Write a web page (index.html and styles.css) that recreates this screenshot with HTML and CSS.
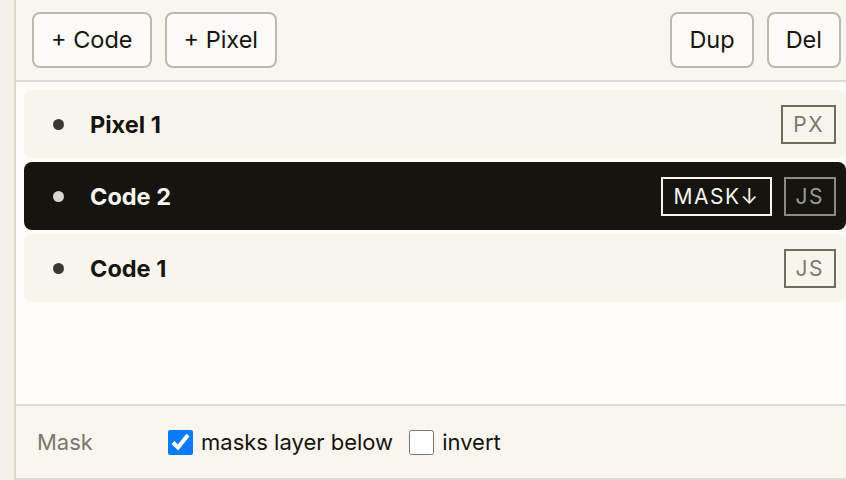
FILE: index.html
```html
<!DOCTYPE html>
<html>
<head>
<meta charset="utf-8">
<link rel="stylesheet" href="styles.css">
</head>
<body>
<div class="side"></div>
<div class="panel">
  <div class="toolbar">
    <button class="btn">+ Code</button>
    <button class="btn">+ Pixel</button>
    <div class="spacer"></div>
    <button class="btn">Dup</button>
    <button class="btn">Del</button>
  </div>
  <div class="list">
    <div class="row">
      <span class="dot"></span>
      <span class="name">Pixel 1</span>
      <span class="badge">PX</span>
    </div>
    <div class="row active">
      <span class="dot"></span>
      <span class="name">Code 2</span>
      <span class="badge mask">MASK↓</span>
      <span class="badge">JS</span>
    </div>
    <div class="row">
      <span class="dot"></span>
      <span class="name">Code 1</span>
      <span class="badge">JS</span>
    </div>
  </div>
  <div class="footer">
    <span class="label">Mask</span>
    <label class="check"><input type="checkbox" checked> masks layer below</label>
    <label class="check"><input type="checkbox"> invert</label>
  </div>
</div>
</body>
</html>
```
FILE: styles.css
```css
html, body {
  margin: 0;
  padding: 0;
}
body {
  width: 846px;
  height: 480px;
  overflow: hidden;
  display: flex;
  font-family: Inter, "Noto Sans", sans-serif;
  background: #f3f0e7;
  color: #1a1812;
}
.side {
  width: 14px;
  flex: none;
  background: #f3f0e7;
  border-right: 2px solid #dedad0;
}
.panel {
  flex: 1;
  display: flex;
  flex-direction: column;
  min-width: 0;
}
.toolbar {
  height: 82px;
  box-sizing: border-box;
  flex: none;
  display: flex;
  align-items: center;
  gap: 13px;
  padding: 0 5px 0 16px;
  background: #f8f6ef;
  border-bottom: 2px solid #dedad0;
}
.spacer { flex: 1; }
.btn {
  height: 56px;
  padding: 0 17px;
  font-family: inherit;
  font-size: 23.5px;
  color: #16140f;
  background: #fcfbf7;
  border: 2px solid #bcb9b0;
  border-radius: 8px;
  margin-top: -1px;
}
.btn.narrow { padding: 0 15px; }
.list {
  flex: 1;
  background: #fdfcf8;
  padding: 8px 0 0 8px;
  display: flex;
  flex-direction: column;
  gap: 4px;
}
.row {
  height: 68px;
  box-sizing: border-box;
  display: flex;
  align-items: center;
  padding: 0 10px 0 29px;
  background: #f8f6ec;
  border-radius: 8px;
  gap: 12px;
}
.dot {
  width: 11px;
  height: 11px;
  border-radius: 50%;
  background: #3a3830;
  flex: none;
}
.name {
  flex: 1;
  margin-left: 14px;
  font-weight: 700;
  font-size: 23.5px;
  color: #16140f;
}
.badge {
  height: 39px;
  box-sizing: border-box;
  padding: 0 10px;
  display: flex;
  align-items: center;
  border: 2px solid #6e6c60;
  font-size: 21px;
  letter-spacing: 1.5px;
  color: #7a786e;
}
.row.active {
  background: #16140f;
}
.row.active .dot { background: #d8d6d0; }
.row.active .name { color: #f7f5ee; }
.row.active .badge {
  border-color: #8c8a84;
  color: #9c9a94;
}
.row.active .badge.mask {
  border-color: #f7f5ee;
  color: #f7f5ee;
}
.footer {
  height: 76px;
  flex: none;
  box-sizing: border-box;
  display: flex;
  align-items: center;
  padding: 0 0 0 21px;
  background: #f8f6ee;
  border-top: 2px solid #dedad0;
  border-bottom: 2px solid #dedad0;
  font-size: 22px;
}
.label {
  color: #7a786e;
  width: 131px;
}
.check {
  display: flex;
  align-items: center;
  gap: 8px;
  margin-right: 16px;
  color: #16140f;
}
.check input {
  width: 25px;
  height: 25px;
  margin: 0;
  accent-color: #0b7af5;
}
```
